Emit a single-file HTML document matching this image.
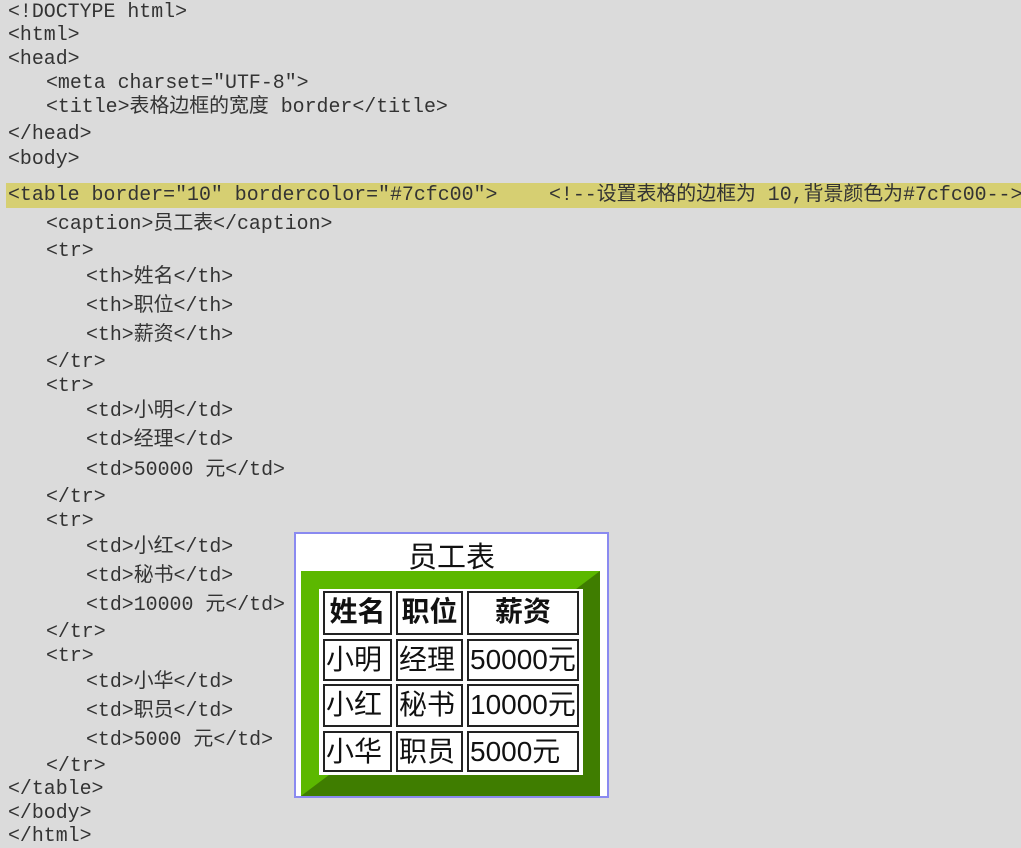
<!DOCTYPE html>
<html><head><meta charset="UTF-8"><style>
body{margin:0;width:1021px;height:847px;background:#dbdbdb;position:relative;overflow:hidden;font-family:"Liberation Mono","Noto Sans CJK SC",monospace;font-size:19.9px;color:#333}
.l{position:absolute;white-space:pre;line-height:24px}
.hl{position:absolute;left:6px;top:183px;width:1015px;height:25px;background:#d6cf72}
.box{position:absolute;left:296px;top:534px;width:311px;height:262px;background:#fff;box-shadow:0 0 0 2px #8a8af0}
.cap{position:absolute;left:296px;width:311px;top:534px;text-align:center;font-family:"Liberation Sans","Noto Sans CJK SC",sans-serif;font-size:29px;color:#111}
.g{position:absolute;left:301px;top:571px;width:299px;height:225px;background:#3f7d00}
.gl{position:absolute;left:301px;top:571px;width:0;height:0;border-left:299px solid #5cb800;border-bottom:225px solid transparent}
.in{position:absolute;left:319px;top:589px;width:264px;height:186px;background:#fff}
.c{position:absolute;border:2px solid #222;box-sizing:border-box;font-family:"Liberation Sans","Noto Sans CJK SC",sans-serif;font-size:28px;line-height:38px;color:#111;padding-left:1px;white-space:nowrap;overflow:hidden}
.th{font-weight:bold;text-align:center;padding:0}
</style></head><body>
<div class="hl"></div>
<div class="l" style="left:8px;top:0">&lt;!DOCTYPE html&gt;</div>
<div class="l" style="left:8px;top:23px">&lt;html&gt;</div>
<div class="l" style="left:8px;top:47px">&lt;head&gt;</div>
<div class="l" style="left:46px;top:71px">&lt;meta charset="UTF-8"&gt;</div>
<div class="l" style="left:46px;top:95px">&lt;title&gt;表格边框的宽度 border&lt;/title&gt;</div>
<div class="l" style="left:8px;top:122px">&lt;/head&gt;</div>
<div class="l" style="left:8px;top:147px">&lt;body&gt;</div>
<div class="l" style="left:8px;top:183px">&lt;table border="10" bordercolor="#7cfc00"&gt;</div>
<div class="l" style="left:549px;top:183px">&lt;!--设置表格的边框为 10,背景颜色为#7cfc00--&gt;</div>
<div class="l" style="left:46px;top:212px">&lt;caption&gt;员工表&lt;/caption&gt;</div>
<div class="l" style="left:46px;top:239px">&lt;tr&gt;</div>
<div class="l" style="left:86px;top:265px">&lt;th&gt;姓名&lt;/th&gt;</div>
<div class="l" style="left:86px;top:294px">&lt;th&gt;职位&lt;/th&gt;</div>
<div class="l" style="left:86px;top:323px">&lt;th&gt;薪资&lt;/th&gt;</div>
<div class="l" style="left:46px;top:350px">&lt;/tr&gt;</div>
<div class="l" style="left:46px;top:374px">&lt;tr&gt;</div>
<div class="l" style="left:86px;top:399px">&lt;td&gt;小明&lt;/td&gt;</div>
<div class="l" style="left:86px;top:428px">&lt;td&gt;经理&lt;/td&gt;</div>
<div class="l" style="left:86px;top:458px">&lt;td&gt;50000 元&lt;/td&gt;</div>
<div class="l" style="left:46px;top:485px">&lt;/tr&gt;</div>
<div class="l" style="left:46px;top:509px">&lt;tr&gt;</div>
<div class="l" style="left:86px;top:535px">&lt;td&gt;小红&lt;/td&gt;</div>
<div class="l" style="left:86px;top:564px">&lt;td&gt;秘书&lt;/td&gt;</div>
<div class="l" style="left:86px;top:593px">&lt;td&gt;10000 元&lt;/td&gt;</div>
<div class="l" style="left:46px;top:620px">&lt;/tr&gt;</div>
<div class="l" style="left:46px;top:644px">&lt;tr&gt;</div>
<div class="l" style="left:86px;top:670px">&lt;td&gt;小华&lt;/td&gt;</div>
<div class="l" style="left:86px;top:699px">&lt;td&gt;职员&lt;/td&gt;</div>
<div class="l" style="left:86px;top:728px">&lt;td&gt;5000 元&lt;/td&gt;</div>
<div class="l" style="left:46px;top:754px">&lt;/tr&gt;</div>
<div class="l" style="left:8px;top:777px">&lt;/table&gt;</div>
<div class="l" style="left:8px;top:801px">&lt;/body&gt;</div>
<div class="l" style="left:8px;top:824px">&lt;/html&gt;</div>

<div class="box"></div>
<div class="cap">员工表</div>
<div class="g"></div><div class="gl"></div>
<div class="in"></div>
<div class="c th" style="left:323px;top:591px;width:69px;height:44px">姓名</div>
<div class="c th" style="left:396px;top:591px;width:67px;height:44px">职位</div>
<div class="c th" style="left:467px;top:591px;width:112px;height:44px">薪资</div>
<div class="c" style="left:323px;top:639px;width:69px;height:42px">小明</div>
<div class="c" style="left:396px;top:639px;width:67px;height:42px">经理</div>
<div class="c" style="left:467px;top:639px;width:112px;height:42px">50000元</div>
<div class="c" style="left:323px;top:684px;width:69px;height:43px">小红</div>
<div class="c" style="left:396px;top:684px;width:67px;height:43px">秘书</div>
<div class="c" style="left:467px;top:684px;width:112px;height:43px">10000元</div>
<div class="c" style="left:323px;top:731px;width:69px;height:41px">小华</div>
<div class="c" style="left:396px;top:731px;width:67px;height:41px">职员</div>
<div class="c" style="left:467px;top:731px;width:112px;height:41px">5000元</div>
</body></html>
